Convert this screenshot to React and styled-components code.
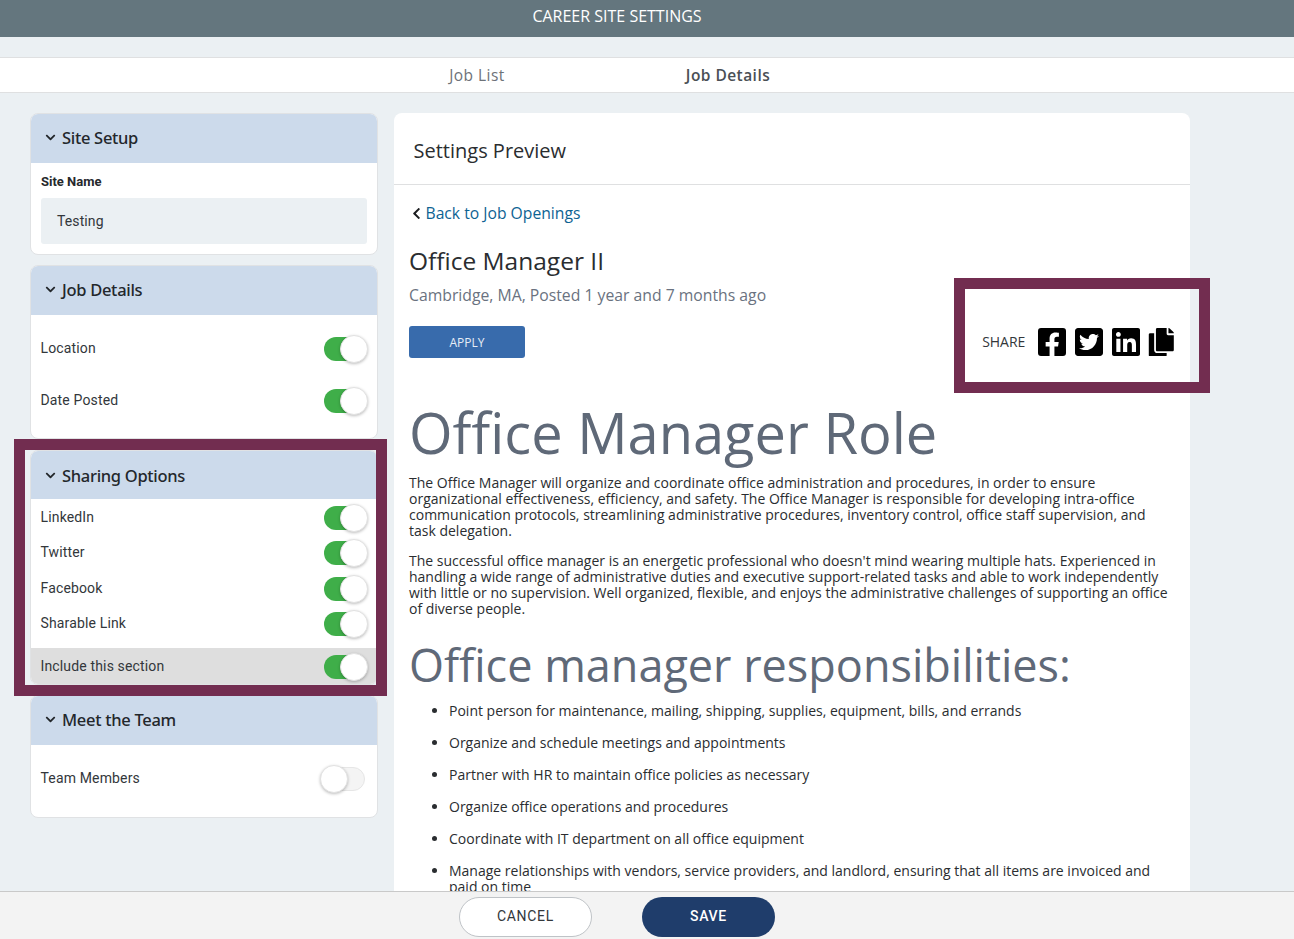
import React from "react";
import styled, { createGlobalStyle } from "styled-components";
import { FaFacebookSquare, FaTwitterSquare, FaLinkedin, FaCopy, FaChevronDown, FaChevronLeft } from "react-icons/fa";

const Global = createGlobalStyle`
  html, body { margin: 0; padding: 0; }
  body { font-family: "Open Sans", "Liberation Sans", sans-serif; background: #ebf0f3; }
  * { box-sizing: border-box; }
`;

const Page = styled.div`
  position: relative;
  width: 1294px;
  height: 939px;
  overflow: hidden;
  display: flex;
  flex-direction: column;
  background: #ebf0f3;
`;
const Header = styled.header`
  height: 37px;
  flex: none;
  background: #64767e;
  color: #fff;
  display: flex;
  align-items: center;
  justify-content: center;
  padding: 0 60px 5px 0;
  font-size: 16px;
`;
const Tabs = styled.nav`
  margin-top: 20px;
  height: 36px;
  flex: none;
  background: #fff;
  border-top: 1px solid #dfe0e1;
  border-bottom: 1px solid #dfe0e1;
  display: flex;
  align-items: center;
  justify-content: center;
  padding: 0 89px 1px 0;
`;
const Tab = styled.div`
  width: 251px;
  text-align: center;
  font-size: 15.5px;
  letter-spacing: 0.45px;
  color: ${p => (p.$active ? "#4a4f55" : "#6d7278")};
  font-weight: ${p => (p.$active ? 600 : 400)};
`;
const Main = styled.main`
  flex: 1;
  min-height: 0;
  overflow: hidden;
  display: flex;
  align-items: flex-start;
  gap: 16px;
  padding: 20px 0 0 30px;
`;
const Sidebar = styled.aside`
  width: 348px;
  flex: none;
  display: flex;
  flex-direction: column;
`;
const Card = styled.section`
  background: #fff;
  border: 1px solid #e0e2e4;
  border-radius: 8px;
  overflow: hidden;
  height: ${p => p.$h}px;
  margin-bottom: ${p => p.$mb}px;
  display: flex;
  flex-direction: column;
`;
const CardHead = styled.div`
  height: ${p => p.$h}px;
  flex: none;
  background: #ccdaeb;
  display: flex;
  align-items: center;
  gap: 6px;
  padding: 0 0 ${p => p.$pb}px 14px;
  color: #23272b;
  font-family: "Noto Sans", sans-serif;
  font-size: 16.5px;
  font-weight: 500;
  letter-spacing: -0.3px;
  svg { font-size: 11px; }
`;
const CardBody = styled.div`
  flex: 1;
  display: flex;
  flex-direction: column;
  padding: ${p => p.$pad || "0"};
`;
const FieldLabel = styled.label`
  font-family: Roboto, sans-serif;
  font-weight: 700;
  font-size: 13px;
  color: #26292c;
  margin: 11px 0 9px;
`;
const FieldValue = styled.div`
  height: 46px;
  border-radius: 3px;
  background: #ebf0f3;
  display: flex;
  align-items: center;
  padding-left: 16px;
  font-family: Roboto, sans-serif;
  font-size: 14px;
  letter-spacing: 0.1px;
  color: #33373b;
`;
const Row = styled.div`
  height: ${p => p.$h}px;
  flex: none;
  display: flex;
  align-items: center;
  justify-content: space-between;
  padding: 0 12px 0 9.5px;
  font-family: Roboto, sans-serif;
  font-size: 14px;
  letter-spacing: 0.15px;
  color: #33373b;
  background: ${p => (p.$shade ? "#dedede" : "transparent")};
  margin-top: ${p => p.$mt || 0}px;
`;
const SwitchTrack = styled.div`
  position: relative;
  width: 41px;
  height: 24px;
  margin-top: 2px;
  border-radius: 12px;
  background: ${p => (p.$on ? "#3fae49" : "#f4f4f4")};
  border: ${p => (p.$on ? "none" : "1px solid #e6e6e6")};
`;
const SwitchKnob = styled.div`
  position: absolute;
  top: ${p => (p.$on ? -2 : -3)}px;
  ${p => (p.$on ? "right: -3px;" : "left: -5px;")}
  width: 28px;
  height: 28px;
  border-radius: 50%;
  background: #fff;
  border: 1px solid #e2e2e2;
  box-shadow: 0 1px 3px rgba(0, 0, 0, 0.25);
`;
const Preview = styled.section`
  width: 796px;
  flex: none;
  background: #fff;
  border-radius: 8px 8px 0 0;
  min-height: 800px;
`;
const PreviewTitle = styled.div`
  height: 72px;
  border-bottom: 1px solid #dfe0e1;
  display: flex;
  align-items: center;
  padding: 4px 0 0 19.5px;
  font-size: 20px;
  color: #2a2d30;
`;
const PreviewBody = styled.div`
  padding: 17px 22px 0 15px;
`;
const BackLink = styled.a`
  display: flex;
  align-items: center;
  gap: 3px;
  padding-left: 0.5px;
  font-size: 15.7px;
  line-height: 22px;
  color: #0d6393;
  svg { color: #1b1d20; font-size: 13px; }
`;
const JobHead = styled.div`
  display: flex;
  justify-content: space-between;
  align-items: flex-start;
  margin-top: 19px;
`;
const JobTitle = styled.h2`
  margin: 0;
  font-size: 24.5px;
  line-height: 36px;
  font-weight: 400;
  color: #2a2d30;
`;
const JobMeta = styled.div`
  font-size: 15.75px;
  line-height: 22px;
  margin-top: 5px;
  color: #6a7280;
`;
const ApplyButton = styled.button`
  display: block;
  margin-top: 20px;
  width: 116px;
  height: 32px;
  border: none;
  border-radius: 3px;
  background: #386bac;
  color: #e6edf6;
  font-family: inherit;
  font-size: 12px;
`;
const Share = styled.div`
  display: flex;
  align-items: center;
  margin: 83px -8px 0 0;
  font-size: 14px;
  color: #33373b;
`;
const ShareLabel = styled.span`
  margin-right: 11px;
  padding-bottom: 2px;
`;
const ShareIcon = styled.span`
  display: flex;
  margin-right: ${p => p.$mr ?? 5}px;
  font-size: ${p => p.$size || 32}px;
  color: #000;
`;
const RoleTitle = styled.h1`
  margin: 36px 0 0;
  font-size: 56px;
  line-height: 76px;
  font-weight: 400;
  color: #5f6978;
`;
const Para = styled.p`
  margin: ${p => p.$mt}px 0 0;
  font-size: 14px;
  line-height: 16px;
  color: #2a2d30;
`;
const SectionTitle = styled.h2`
  margin: 17px 0 0;
  font-size: 45px;
  line-height: 62px;
  font-weight: 400;
  color: #5f6978;
`;
const List = styled.ul`
  margin: 7px 0 0;
  padding: 0 0 0 40px;
`;
const Item = styled.li`
  font-size: 14px;
  line-height: 16px;
  margin-bottom: 16px;
  color: #2a2d30;
`;
const Footer = styled.footer`
  height: 48px;
  flex: none;
  background: #f3f3f3;
  border-top: 1px solid #c9c9c9;
  display: flex;
  justify-content: center;
  gap: 50px;
  padding: 5px 60px 0 0;
`;
const FooterButton = styled.button`
  width: 133px;
  height: 40px;
  padding: 0 0 2px;
  border-radius: 20px;
  border: ${p => (p.$primary ? "none" : "1px solid #bfc3c7")};
  background: ${p => (p.$primary ? "#1f3d6b" : "#fff")};
  color: ${p => (p.$primary ? "#fff" : "#33373b")};
  font-family: Roboto, sans-serif;
  font-size: 14px;
  font-weight: ${p => (p.$primary ? 500 : 400)};
  letter-spacing: 0.7px;
`;
const Highlight = styled.div`
  position: absolute;
  left: ${p => p.$x}px;
  top: ${p => p.$y}px;
  width: ${p => p.$w}px;
  height: ${p => p.$h}px;
  border: 11px solid #722d50;
  pointer-events: none;
`;

const Toggle = ({ on }) => (
  <SwitchTrack $on={on}>
    <SwitchKnob $on={on} />
  </SwitchTrack>
);

const Section = ({ title, h, mb, headH = 49, headPb = 2, children }) => (
  <Card $h={h} $mb={mb}>
    <CardHead $h={headH} $pb={headPb}>
      <FaChevronDown />
      {title}
    </CardHead>
    {children}
  </Card>
);

const duties = [
  "Point person for maintenance, mailing, shipping, supplies, equipment, bills, and errands",
  "Organize and schedule meetings and appointments",
  "Partner with HR to maintain office policies as necessary",
  "Organize office operations and procedures",
  "Coordinate with IT department on all office equipment",
  "Manage relationships with vendors, service providers, and landlord, ensuring that all items are invoiced and paid on time",
];

export default function App() {
  return (
    <Page>
      <Global />
      <Header>CAREER SITE SETTINGS</Header>
      <Tabs>
        <Tab>Job List</Tab>
        <Tab $active>Job Details</Tab>
      </Tabs>
      <Main>
        <Sidebar>
          <Section title="Site Setup" h={142} mb={10}>
            <CardBody $pad="0 10px">
              <FieldLabel>Site Name</FieldLabel>
              <FieldValue>Testing</FieldValue>
            </CardBody>
          </Section>
          <Section title="Job Details" h={174} mb={11}>
            <CardBody $pad="7px 0 0">
              <Row $h={52}>Location<Toggle on /></Row>
              <Row $h={52}>Date Posted<Toggle on /></Row>
            </CardBody>
          </Section>
          <Section title="Sharing Options" h={235} mb={10} headH={48} headPb={0}>
            <CardBody $pad="0.3px 0 0">
              <Row $h={35.3}>LinkedIn<Toggle on /></Row>
              <Row $h={35.3}>Twitter<Toggle on /></Row>
              <Row $h={35.3}>Facebook<Toggle on /></Row>
              <Row $h={35.3}>Sharable Link<Toggle on /></Row>
              <Row $h={37} $shade $mt={7.5}>Include this section<Toggle on /></Row>
            </CardBody>
          </Section>
          <Section title="Meet the Team" h={123} mb={0}>
            <CardBody $pad="8px 0 0">
              <Row $h={50}>Team Members<Toggle /></Row>
            </CardBody>
          </Section>
        </Sidebar>
        <Preview>
          <PreviewTitle>Settings Preview</PreviewTitle>
          <PreviewBody>
            <BackLink>
              <FaChevronLeft />
              Back to Job Openings
            </BackLink>
            <JobHead>
              <div>
                <JobTitle>Office Manager II</JobTitle>
                <JobMeta>Cambridge, MA, Posted 1 year and 7 months ago</JobMeta>
                <ApplyButton>APPLY</ApplyButton>
              </div>
              <Share>
                <ShareLabel>SHARE</ShareLabel>
                <ShareIcon><FaFacebookSquare /></ShareIcon>
                <ShareIcon><FaTwitterSquare /></ShareIcon>
                <ShareIcon $mr={5}><FaLinkedin /></ShareIcon>
                <ShareIcon $size={28.6} $mr={0}><FaCopy /></ShareIcon>
              </Share>
            </JobHead>
            <RoleTitle>Office Manager Role</RoleTitle>
            <Para $mt={5}>
              The Office Manager will organize and coordinate office administration and procedures, in order to ensure organizational effectiveness, efficiency, and safety. The Office Manager is responsible for developing intra-office communication protocols, streamlining administrative procedures, inventory control, office staff supervision, and task delegation.
            </Para>
            <Para $mt={14}>
              The successful office manager is an energetic professional who doesn't mind wearing multiple hats. Experienced in handling a wide range of administrative duties and executive support-related tasks and able to work independently with little or no supervision. Well organized, flexible, and enjoys the administrative challenges of supporting an office of diverse people.
            </Para>
            <SectionTitle>Office manager responsibilities:</SectionTitle>
            <List>
              {duties.map(d => <Item key={d}>{d}</Item>)}
            </List>
          </PreviewBody>
        </Preview>
      </Main>
      <Footer>
        <FooterButton>CANCEL</FooterButton>
        <FooterButton $primary>SAVE</FooterButton>
      </Footer>
      <Highlight $x={14} $y={439} $w={373} $h={257} />
      <Highlight $x={954} $y={278} $w={256} $h={115} />
    </Page>
  );
}
